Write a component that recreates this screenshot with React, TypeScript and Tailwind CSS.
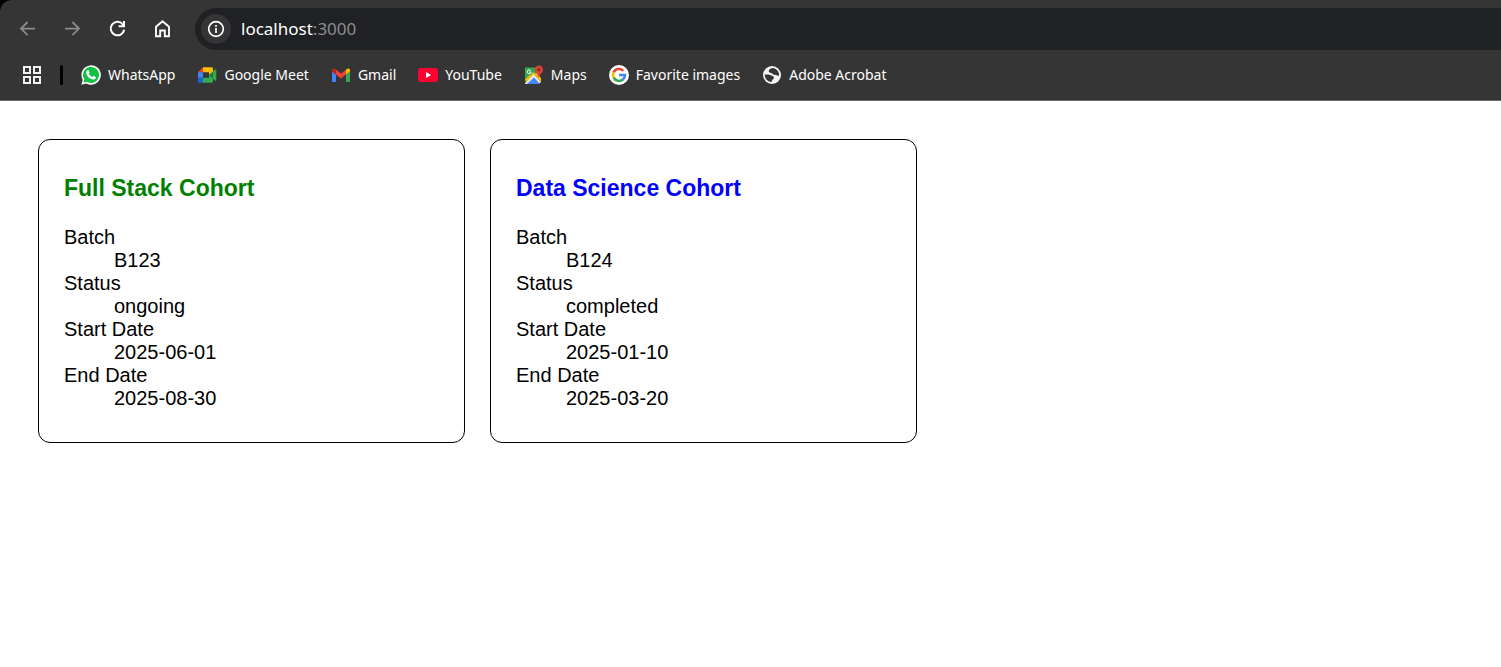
import type { ReactNode } from "react";

type Bookmark = { label: string; icon: ReactNode };
type Cohort = {
  title: string;
  batch: string;
  status: string;
  start: string;
  end: string;
};

const BackIcon = () => (
  <svg viewBox="0 0 20 20" className="size-5" fill="none" stroke="#8b8b8b" strokeWidth="1.8">
    <path d="M17 9.600H3.500M9.600 3 3 9.600l6.600 6.600" />
  </svg>
);

const ForwardIcon = () => (
  <svg viewBox="0 0 20 20" className="size-5" fill="none" stroke="#8b8b8b" strokeWidth="1.8">
    <path d="M2 9.600h13.500M9.400 3 16 9.600l-6.600 6.600" />
  </svg>
);

const ReloadIcon = () => (
  <svg viewBox="0 0 20 20" className="size-5" fill="none" stroke="#fff" strokeWidth="2">
    <path d="M16.200 10.800A6.800 6.800 0 1 1 14.600 5l1 1.200" />
    <path d="M16 2v5.300h-5.400" />
    <path d="m13.200 6.800 2.600-2.600v2.600z" fill="#fff" stroke="none" />
  </svg>
);

const HomeIcon = () => (
  <svg viewBox="0 0 20 20" className="size-5" fill="none" stroke="#fff" strokeWidth="1.9">
    <path d="M3 17.300V7.800l6.500-5.500L16 7.800v9.500h-4.200v-5.800H7.200v5.800z" />
  </svg>
);

const InfoIcon = () => (
  <svg viewBox="0 0 18 18" className="size-[18px]" fill="none" stroke="#fff" strokeWidth="1.7">
    <circle cx="9" cy="9" r="7.300" />
    <path d="M9 8v5M9 5v1.800" />
  </svg>
);

const AppsIcon = () => (
  <svg viewBox="0 0 20 20" className="size-5" fill="none" stroke="#f1f1f1" strokeWidth="2">
    <rect x="2" y="2" width="6" height="6" />
    <rect x="12" y="2" width="6" height="6" />
    <rect x="2" y="12" width="6" height="6" />
    <rect x="12" y="12" width="6" height="6" />
  </svg>
);

const WhatsAppIcon = () => (
  <svg viewBox="0 0 20 20" className="size-5">
    <path fill="#fff" d="M.3 19.8 1.7 14.7A9.7 9.7 0 1 1 5.4 18.4z" />
    <path fill="#10c144" d="m2.400 17.700.9-3.400A8 8 0 1 1 5.900 16.800z" />
    <path
      fill="#fff"
      d="M6.400 5.300c.4-.4 1-.4 1.200.1l.8 1.800c.1.300 0 .6-.7 1.400.9 1.700 2 2.700 3.700 3.400.8-1 1-1.200 1.400-1l1.800.9c.4.200.4.400.3.900-.3 1.300-1.600 1.900-2.700 1.800-3.500-.6-6.300-3.500-6.900-6.200-.2-1.200.3-2.400 1.100-3.100z"
    />
  </svg>
);

const MeetIcon = () => (
  <svg viewBox="0 0 20 20" className="size-5">
    <path fill="#ea4335" d="M1 7.200 6 2.300v4.900z" />
    <path fill="#4285f4" d="M1 7.200h5v5.600H1z" />
    <path fill="#1967d2" d="M1 12.800h5v5H2.600c-.9 0-1.600-.7-1.600-1.600z" />
    <path fill="#fbbc04" d="M6 2.300h8.400c1 0 1.600.7 1.600 1.600v4.300L12 11V7.200H6z" />
    <path fill="#34a853" d="M6 12.800h6V10l4-2.500v8.700c0 .9-.6 1.600-1.600 1.600H6z" />
    <path fill="#188038" d="m12 10.100 4-3.500v7z" />
    <path fill="#34a853" d="m16 6.600 2.300-2.200c.4-.4 1-.1 1 .4v10.600c0 .6-.6.800-1 .4L16 13.700z" />
  </svg>
);

const GmailIcon = () => (
  <svg viewBox="0 0 20 20" className="size-5">
    <path fill="#4285f4" d="M1 6.500 5 9.500V17H2.300C1.500 17 1 16.500 1 15.700z" />
    <path fill="#34a853" d="M19 6.500 15 9.500V17h2.700c.8 0 1.300-.5 1.300-1.300z" />
    <path fill="#ea4335" d="m5 4.800 5 3.800 5-3.800v4.800l-5 3.800-5-3.800z" />
    <path fill="#c5221f" d="M1 5.200C1 3.300 3 2.900 4.200 4L5 4.800v4.800L1 6.600z" />
    <path fill="#fbbc04" d="M19 5.200c0-1.900-2-2.300-3.200-1.200l-.8.8v4.800l4-3z" />
  </svg>
);

const YouTubeIcon = () => (
  <svg viewBox="0 0 20 20" className="size-5">
    <rect y="3" width="20" height="14" rx="3" fill="#ff0033" />
    <path fill="#fff" d="m8 7 5.200 3L8 13z" />
  </svg>
);

const MapsIcon = () => (
  <svg viewBox="0 0 20 20" className="size-5">
    <path fill="#34a853" d="M1 2.500h15v7L9 11l-8 8z" />
    <path fill="#fbbc04" d="M1 14.500 9.500 7l1.500 2-7.500 8.500z" />
    <path fill="#e8eaed" d="m1 18.500 9-9.500 7 8-3 2H1z" />
    <path fill="#4285f4" d="m3 19 7-6.500 6 6.500z" />
    <path fill="#fbbc04" d="m10.500 9 1.800-1.500L17 13v5z" />
    <path fill="none" stroke="#fff" strokeWidth="1" d="M6.600 5.600A1.900 1.900 0 1 0 7 7H5.300" />
    <path fill="#db4437" d="M14.900.5a4.100 4.100 0 0 1 4.100 4.200c0 3-3.300 3.800-4.100 8.300-.8-4.500-4.100-5.300-4.100-8.300A4.100 4.100 0 0 1 14.900.5z" />
    <circle cx="14.900" cy="4.700" r="1.500" fill="#901f18" />
  </svg>
);

const GoogleIcon = () => (
  <svg viewBox="0 0 20 20" className="size-5" fill="none" strokeWidth="2.600">
    <circle cx="10" cy="10" r="10" fill="#fff" />
    <path stroke="#ea4335" d="M4.600 7.300A6 6 0 0 1 14.300 5.800" />
    <path stroke="#fbbc05" d="M4.700 12.800A6 6 0 0 1 4.700 7.200" />
    <path stroke="#34a853" d="M13.800 14.600A6 6 0 0 1 4.700 12.700" />
    <path stroke="#4285f4" d="M10 10h6a6 6 0 0 1-2.300 4.700" />
  </svg>
);

const GlobeIcon = () => (
  <svg viewBox="0 0 20 20" className="size-5">
    <circle cx="10" cy="10" r="9" fill="#f5f5f5" />
    <path
      fill="#353535"
      d="M11.500 3c-2.500.3-4.300 1-4.700 2.600-.3 1.500.8 2.400 2.300 2.400 1.200 0 1.400 1.100 2.300 1.600 1 .6 2.500.2 3.200.7.800.6 1.700.5 2.500.2A7.300 7.300 0 0 0 11.500 3z"
    />
    <path
      fill="#353535"
      d="M2.700 9.600c1.700-.3 3.600-.3 5.300.3 1.800.6 3.900 1 4 2.700.1 1.400-1.500 1.500-1.700 2.500-.1.800-.6 1.700-1.400 2A7.300 7.300 0 0 1 2.700 9.600z"
    />
  </svg>
);

const bookmarks: Bookmark[] = [
  { label: "WhatsApp", icon: <WhatsAppIcon /> },
  { label: "Google Meet", icon: <MeetIcon /> },
  { label: "Gmail", icon: <GmailIcon /> },
  { label: "YouTube", icon: <YouTubeIcon /> },
  { label: "Maps", icon: <MapsIcon /> },
  { label: "Favorite images", icon: <GoogleIcon /> },
  { label: "Adobe Acrobat", icon: <GlobeIcon /> },
];

const cohorts: Cohort[] = [
  { title: "Full Stack Cohort", batch: "B123", status: "ongoing", start: "2025-06-01", end: "2025-08-30" },
  { title: "Data Science Cohort", batch: "B124", status: "completed", start: "2025-01-10", end: "2025-03-20" },
];

function BrowserBar() {
  return (
    <div className="bg-black font-['Noto_Sans',sans-serif]">
      <header className="rounded-tl-xl border-b border-[#6b6b6b] bg-[#353535] pt-2">
        <div className="flex items-center">
          <nav aria-label="Navigation" className="flex gap-[25px] pr-[22px] pl-[18px]">
            <button type="button" aria-label="Back"><BackIcon /></button>
            <button type="button" aria-label="Forward"><ForwardIcon /></button>
            <button type="button" aria-label="Reload"><ReloadIcon /></button>
            <button type="button" aria-label="Home"><HomeIcon /></button>
          </nav>
          <div className="flex h-[42px] flex-1 items-center gap-[10px] rounded-l-full bg-[#202124] pl-[6px]">
            <button
              type="button"
              aria-label="Site information"
              className="flex size-[30px] items-center justify-center rounded-full bg-[#353535]"
            >
              <InfoIcon />
            </button>
            <p className="text-[17px] text-white">
              localhost<span className="text-[#8b8c8e]">:3000</span>
            </p>
          </div>
        </div>
        <div className="flex h-[50px] items-center pl-[22px] text-sm text-white">
          <button type="button" aria-label="Apps"><AppsIcon /></button>
          <span className="mr-[18px] ml-[18px] h-5 w-[3px] rounded-full bg-black" />
          <nav aria-label="Bookmarks" className="flex gap-[22px]">
            {bookmarks.map(({ label, icon }) => (
              <a key={label} href="#" className="flex items-center gap-[7px] whitespace-nowrap">
                {icon}
                {label}
              </a>
            ))}
          </nav>
        </div>
      </header>
    </div>
  );
}

function CohortCard({ cohort }: { cohort: Cohort }) {
  const color = cohort.status === "ongoing" ? "text-[#008000]" : "text-[#0000ff]";
  const rows = [
    ["Batch", cohort.batch],
    ["Status", cohort.status],
    ["Start Date", cohort.start],
    ["End Date", cohort.end],
  ];
  return (
    <article className="w-[427px] rounded-xl border border-black px-[25px] pt-[35px] pb-8">
      <h3 className={`mb-6 text-[23px] leading-[27px] font-bold ${color}`}>{cohort.title}</h3>
      <dl className="text-xl leading-[23px]">
        {rows.map(([term, value]) => (
          <div key={term}>
            <dt>{term}</dt>
            <dd className="ml-[50px]">{value}</dd>
          </div>
        ))}
      </dl>
    </article>
  );
}

export default function App() {
  return (
    <div className="min-h-screen bg-white text-black">
      <BrowserBar />
      <main className="flex flex-wrap gap-[25px] px-[38px] py-[38px] font-['Liberation_Sans',sans-serif]">
        {cohorts.map((cohort) => (
          <CohortCard key={cohort.batch} cohort={cohort} />
        ))}
      </main>
    </div>
  );
}
